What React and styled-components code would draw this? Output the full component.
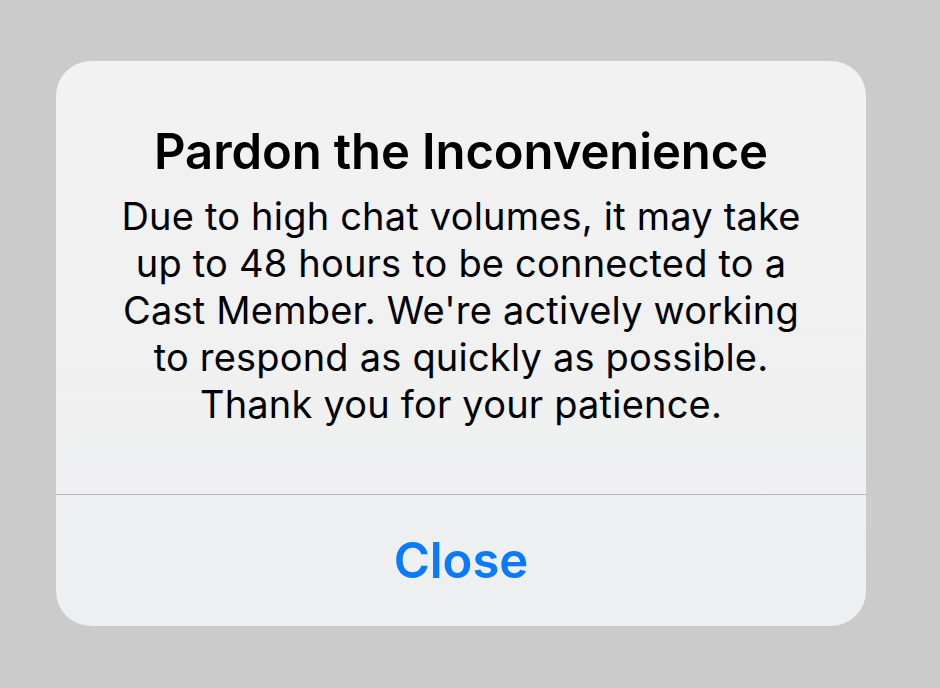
import React from "react";
import styled, { createGlobalStyle } from "styled-components";

const Global = createGlobalStyle`
  html, body { margin: 0; padding: 0; background: #cbcbcb; }
  body { font-family: Inter, "Noto Sans", sans-serif; }
`;

const Screen = styled.div`
  width: 940px;
  height: 688px;
  background: #cbcbcb;
  display: flex;
  align-items: flex-start;
  justify-content: flex-start;
  padding: 61px 0 0 56px;
  box-sizing: border-box;
`;

const Dialog = styled.div`
  width: 810px;
  height: 565px;
  border-radius: 35px;
  background: linear-gradient(#f2f2f2, #eeeff0);
  display: flex;
  flex-direction: column;
  overflow: hidden;
`;

const Body = styled.div`
  flex: 1;
  display: flex;
  flex-direction: column;
  align-items: center;
  padding: 61px 20px 0;
  text-align: center;
  color: #000;
`;

const Title = styled.h1`
  margin: 0;
  font-size: 49px;
  font-weight: 600;
  line-height: 60px;
  letter-spacing: -0.1px;
`;

const Message = styled.p`
  margin: 11px 0 0;
  font-size: 38px;
  font-weight: 400;
  line-height: 47px;
  letter-spacing: 0.2px;
  white-space: nowrap;
`;

const Divider = styled.div`
  height: 1px;
  background: #b5b5b7;
`;

const ActionButton = styled.button`
  height: 131px;
  border: none;
  background: transparent;
  color: #0a7aff;
  font-family: Inter, "Noto Sans", sans-serif;
  font-size: 49px;
  font-weight: 600;
  cursor: pointer;
  padding: 0;
`;

const lines = [
  "Due to high chat volumes, it may take",
  "up to 48 hours to be connected to a",
  "Cast Member. We're actively working",
  "to respond as quickly as possible.",
  "Thank you for your patience.",
];

export default function App() {
  return (
    <>
      <Global />
      <Screen>
        <Dialog>
          <Body>
            <Title>Pardon the Inconvenience</Title>
            <Message>
              {lines.map((l, i) => (
                <React.Fragment key={i}>
                  {l}
                  {i < lines.length - 1 && <br />}
                </React.Fragment>
              ))}
            </Message>
          </Body>
          <Divider />
          <ActionButton>Close</ActionButton>
        </Dialog>
      </Screen>
    </>
  );
}
